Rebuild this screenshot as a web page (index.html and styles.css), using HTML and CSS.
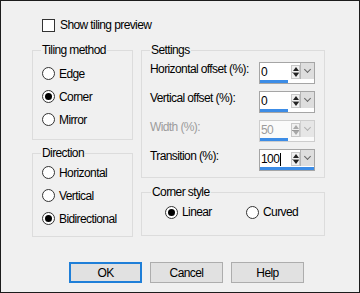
FILE: index.html
```html
<!DOCTYPE html>
<html lang="en">

<head>
	<meta charset="UTF-8">
	<title>Tiling</title>
	<link rel="stylesheet" href="styles.css">
</head>

<body>
	<div id="dialog">
		<label class="check"><span class="box"></span>Show tiling preview</label>
		<div class="panes">
			<div class="column left">
				<fieldset class="group tiling">
					<legend>Tiling method</legend>
					<div class="radio"><span class="dot"></span>Edge</div>
					<div class="radio"><span class="dot on"></span>Corner</div>
					<div class="radio"><span class="dot"></span>Mirror</div>
				</fieldset>
				<fieldset class="group direction">
					<legend>Direction</legend>
					<div class="radio"><span class="dot"></span>Horizontal</div>
					<div class="radio"><span class="dot"></span>Vertical</div>
					<div class="radio"><span class="dot on"></span>Bidirectional</div>
				</fieldset>
			</div>
			<div class="column right">
				<fieldset class="group settings">
					<legend>Settings</legend>
					<div class="row">
						<span class="label">Horizontal offset (%):</span>
						<div class="spin">
							<div class="top"><span class="field">0</span><span class="arrows"></span><span class="drop"></span></div>
							<div class="bar" style="width: 28px;"></div>
						</div>
					</div>
					<div class="row">
						<span class="label">Vertical offset (%):</span>
						<div class="spin">
							<div class="top"><span class="field">0</span><span class="arrows"></span><span class="drop"></span></div>
							<div class="bar" style="width: 28px;"></div>
						</div>
					</div>
					<div class="row disabled">
						<span class="label">Width (%):</span>
						<div class="spin">
							<div class="top"><span class="field">50</span><span class="arrows"></span><span class="drop"></span></div>
							<div class="bar" style="width: 28px;"></div>
						</div>
					</div>
					<div class="row">
						<span class="label">Transition (%):</span>
						<div class="spin">
							<div class="top"><span class="field">100<span class="caret"></span></span><span class="arrows"></span><span class="drop"></span></div>
							<div class="bar" style="width: 54px;"></div>
						</div>
					</div>
				</fieldset>
				<fieldset class="group corner">
					<legend>Corner style</legend>
					<div class="pair">
						<div class="radio"><span class="dot on"></span>Linear</div>
						<div class="radio"><span class="dot"></span>Curved</div>
					</div>
				</fieldset>
			</div>
		</div>
		<div class="buttons">
			<button class="default">OK</button>
			<button>Cancel</button>
			<button>Help</button>
		</div>
	</div>
</body>

</html>
```

FILE: styles.css
```css
body {
    margin: 0;
    font-family: "Liberation Sans", Arial, sans-serif;
    font-size: 12px;
    letter-spacing: -0.6px;
    color: #000;
}
#dialog {
    width: 360px;
    height: 293px;
    box-sizing: border-box;
    border: 1px solid #1c1c1c;
    background-color: #f0f0f0;
    padding-top: 17px;
}
.check {
    display: flex;
    align-items: center;
    height: 14px;
    margin-left: 41px;
}
.box {
    width: 11px;
    height: 11px;
    border: 1px solid #333;
    background-color: #fff;
    margin-right: 5px;
}
.panes {
    display: flex;
    gap: 8px;
    margin-top: 11px;
    padding-left: 31px;
}
.column {
    display: flex;
    flex-direction: column;
}
.left { width: 101px; gap: 6px; }
.right { width: 184px; gap: 7px; }
.group {
    margin: 0;
    border: 1px solid #dcdcdc;
    padding: 0 8px;
    min-width: 0;
}
.group legend {
    padding: 0 1px;
    height: 14px;
    line-height: 14px;
}
.tiling { padding-top: 5px; padding-bottom: 8px; }
.direction { padding-top: 1px; padding-bottom: 6px; }
.settings { padding-top: 5px; padding-bottom: 6px; }
.corner { padding-top: 2px; padding-bottom: 12px; padding-left: 9px; }
.radio {
    display: flex;
    align-items: center;
    height: 23px;
    margin-left: 1px;
}
.dot {
    width: 11px;
    height: 11px;
    border: 1px solid #333;
    border-radius: 50%;
    background-color: #fff;
    margin-right: 4px;
    display: flex;
    align-items: center;
    justify-content: center;
}
.dot.on::after {
    content: "";
    width: 7px;
    height: 7px;
    border-radius: 50%;
    background-color: #000;
}
.pair {
    display: grid;
    grid-template-columns: 81px 81px;
    padding-left: 14px;
}
.pair .radio { height: 22px; margin-left: 0; }
.row {
    display: flex;
    align-items: flex-start;
    height: 22px;
    margin-bottom: 7px;
}
.row:last-child { margin-bottom: 0; }
.label {
    width: 109px;
    line-height: 14px;
}
.spin {
    width: 54px;
    height: 20px;
    border: 1px solid #a5a5a5;
    background-color: #fff;
}
.spin .top {
    display: flex;
    height: 16px;
    padding-top: 1px;
}
.field {
    width: 31px;
    padding-left: 1px;
    line-height: 15px;
    display: flex;
    align-items: center;
}
.caret {
    width: 1px;
    height: 13px;
    margin-left: 1px;
    background-color: #000;
}
.arrows {
    width: 9px;
    height: 14px;
    margin-top: 1px;
    border: 1px solid #c8c8c8;
    box-sizing: border-box;
    background:
        linear-gradient(#9a9a9a, #9a9a9a) center / 100% 1px no-repeat,
        #f0f0f0;
    position: relative;
}
.arrows::before, .arrows::after {
    content: "";
    position: absolute;
    left: 1px;
    border-left: 3px solid transparent;
    border-right: 3px solid transparent;
}
.arrows::before { top: 1px; border-bottom: 4px solid #222; }
.arrows::after { bottom: 1px; border-top: 4px solid #222; }
.drop {
    width: 13px;
    height: 16px;
    margin-top: -1px;
    background-color: #dedede;
    border-left: 1px solid #b5b5b5;
    display: flex;
    align-items: center;
    justify-content: center;
}
.drop::after {
    content: "";
    width: 4px;
    height: 4px;
    border-right: 1px solid #666;
    border-bottom: 1px solid #666;
    transform: rotate(45deg);
    margin-top: -3px;
}
.bar {
    height: 3px;
    background-color: #3c8ce6;
}
.disabled .label, .disabled .field { color: #9c9c9c; }
.disabled .spin { border-color: #cdcdcd; background-color: #fafafa; }
.disabled .arrows::before { border-bottom-color: #a8a8a8; }
.disabled .arrows::after { border-top-color: #a8a8a8; }
.disabled .drop { background-color: #e6e6e6; border-left-color: #d0d0d0; }
.disabled .drop::after { border-color: #b0b0b0; }
.buttons {
    display: flex;
    gap: 8px;
    margin-top: 25px;
    padding-left: 68px;
}
button {
    width: 73px;
    height: 21px;
    font: inherit;
    letter-spacing: inherit;
    color: #000;
    background-color: #e1e1e1;
    border: 1px solid #adadad;
    padding: 0;
}
button.default {
    border: 2px solid #1f7fd8;
}
```
